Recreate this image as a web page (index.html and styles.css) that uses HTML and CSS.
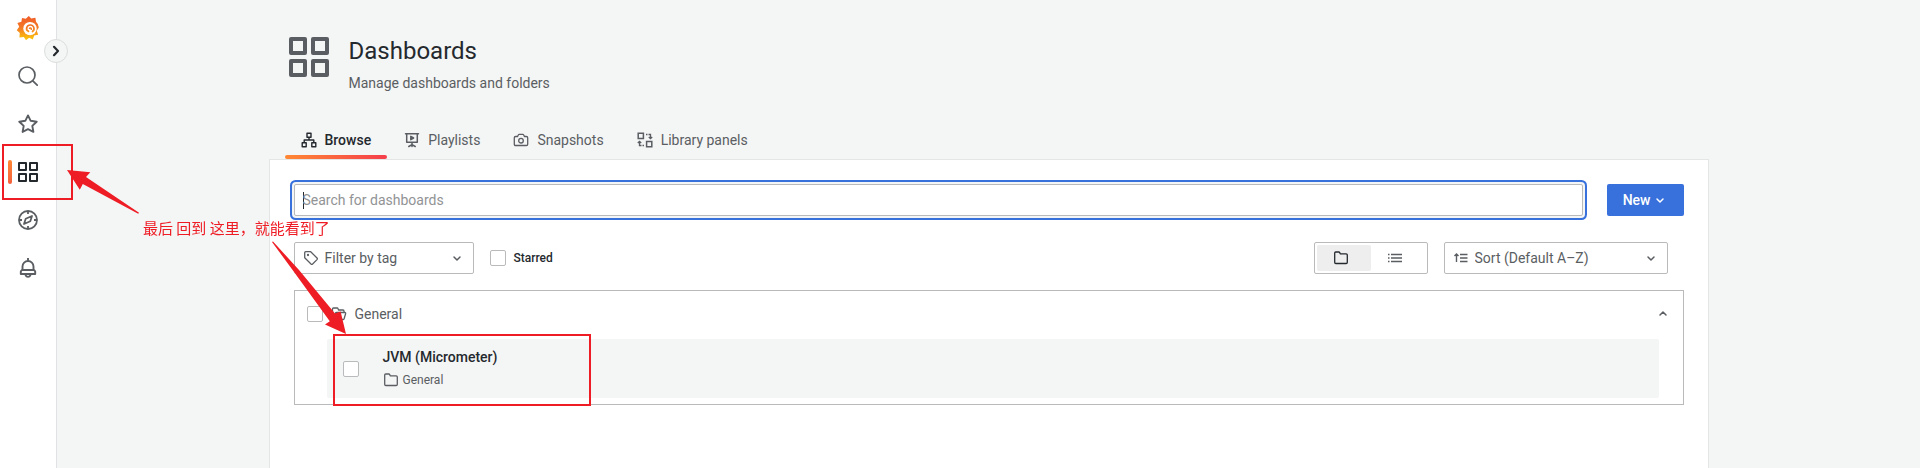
FILE: index.html
```
<!DOCTYPE html>
<html lang="en">

<head>
    <meta charset="UTF-8">
    <meta name="viewport" content="width=device-width, initial-scale=1.0">
    <title>Dashboards - Grafana</title>
    <link rel="stylesheet" href="styles.css">
</head>

<body>
    <!-- shared icon shapes -->
    <svg class="sprite" aria-hidden="true">
        <symbol id="icon-apps" viewBox="0 0 20 20">
            <path d="M1 1h7v7H1zM12 1h7v7h-7zM1 12h7v7H1zM12 12h7v7h-7z" fill="none" stroke="currentColor" stroke-width="2" stroke-linejoin="round" />
        </symbol>
        <symbol id="icon-down" viewBox="0 0 16 16">
            <path d="M5 7l3 3 3-3" fill="none" stroke="currentColor" stroke-width="1.5" stroke-linecap="round" stroke-linejoin="round" />
        </symbol>
        <symbol id="icon-folder" viewBox="0 0 16 16">
            <path d="M2.7 2h3.1q.6 0 .9.6l.5 1.2h6q1.1 0 1.1 1.1v7.4q0 1.2-1.1 1.2H2.8q-1.1 0-1.1-1.2V3q0-1 1-1z" fill="none" stroke="currentColor" stroke-width="1.3" stroke-linejoin="round" />
        </symbol>
    </svg>

    <div class="app">
        <nav class="sidebar">
            <a class="nav-item" href="#" aria-label="Home">
                <svg width="24" height="24" viewBox="0 0 24 24">
                    <defs>
                        <linearGradient id="sun" gradientUnits="userSpaceOnUse" x1="0" y1="0" x2="0" y2="24">
                            <stop offset="0" stop-color="#f05a28" />
                            <stop offset="0.5" stop-color="#f47b25" />
                            <stop offset="1" stop-color="#fbca0a" />
                        </linearGradient>
                    </defs>
                    <path fill="url(#sun)" d="M12.800 0l2.400 2.600 4.200-.8.600 4q2.800 2.600 2.800 5.600l-2 3.400 1.400 4-4 .8-1.400 3.800-3.600-1.600-3.200 2.400-2.200-3.200-4.400.4.400-4.400L.800 14.200l2.400-3.400L1.400 7l4-1.200L6 2l3.800.8z" />
                    <circle cx="14" cy="12.600" r="6.700" fill="#fff" />
                    <path fill="none" stroke="url(#sun)" stroke-width="1.700" stroke-linecap="round" d="M12.500 15.300C9 13.600 10.700 8.800 14.500 9c3.600.2 4.700 4.600 2 6.500M13.600 12.200q1.600-.6 1.700 1" />
                </svg>
            </a>
            <a class="nav-item" href="#" aria-label="Search">
                <svg width="20" height="20" viewBox="0 0 20 20" fill="none" stroke="currentColor" stroke-width="1.7" stroke-linecap="round">
                    <circle cx="9" cy="9" r="8" />
                    <path d="M14.8 14.8L19.200 19.200" />
                </svg>
            </a>
            <a class="nav-item" href="#" aria-label="Starred">
                <svg width="20" height="20" viewBox="0 0 20 20" fill="none" stroke="currentColor" stroke-width="1.9" stroke-linejoin="round">
                    <path d="M10 1.400l2.700 5.400 6 .9-4.400 4.200 1.100 6-5.400-2.800-5.400 2.800 1.100-6L1.300 7.700l6-.9z" />
                </svg>
            </a>
            <a class="nav-item active" href="#" aria-label="Dashboards">
                <svg width="20" height="20"><use href="#icon-apps" /></svg>
            </a>
            <a class="nav-item" href="#" aria-label="Explore">
                <svg width="20" height="20" viewBox="0 0 20 20" fill="none" stroke="currentColor" stroke-width="1.8" stroke-linejoin="round">
                    <circle cx="10" cy="10" r="9" />
                    <path d="M10 1v3M10 16v3M1 10h3M16 10h3M14 6l-1.700 5.200L6 14l1.700-5.200z" />
                </svg>
            </a>
            <a class="nav-item" href="#" aria-label="Alerting">
                <svg width="20" height="20" viewBox="0 0 20 20" fill="none" stroke="currentColor" stroke-width="1.9" stroke-linejoin="round">
                    <path d="M10 0v3M4.500 12V8.500a5.500 5.500 0 0 1 11 0V12M3.800 12h12.400l1 1.500V16H2.800v-2.500zM7.200 16q.8 2.900 2.800 2.900t2.800-2.900" />
                </svg>
            </a>
            <button class="sidebar-toggle" aria-label="Expand menu">
                <svg width="8" height="12" viewBox="0 0 8 12"><path d="M2 1.800L6 6l-4 4.200" fill="none" stroke="currentColor" stroke-width="2.200" stroke-linecap="round" stroke-linejoin="round" /></svg>
            </button>
        </nav>

        <main class="main">
            <header class="page-header">
                <svg width="40" height="40"><use href="#icon-apps" /></svg>
                <div>
                    <h1 class="page-title">Dashboards</h1>
                    <div class="page-subtitle">Manage dashboards and folders</div>
                </div>
            </header>

            <nav class="tabs">
                <a class="tab active" href="#">
                    <svg width="16" height="16" viewBox="0 0 16 16" fill="none" stroke="currentColor" stroke-width="1.400" stroke-linejoin="round">
                        <path d="M6 1.200h4v4H6zM1.200 10.800h4v4h-4zM10.800 10.800h4v4h-4zM8 5.200V8M3.200 10.800V8h9.600v2.800" />
                    </svg>
                    Browse
                </a>
                <a class="tab" href="#">
                    <svg width="16" height="16" viewBox="0 0 16 16" fill="none" stroke="currentColor" stroke-width="1.500" stroke-linecap="round" stroke-linejoin="round">
                        <path d="M1.500 1.700h13M2.700 1.700v8.600h10.600V1.700M8 10.500v4M4.800 14.500L8 12.600l3.200 1.900M6.800 4.300v3.400L9.600 6z" />
                    </svg>
                    Playlists
                </a>
                <a class="tab" href="#">
                    <svg width="16" height="16" viewBox="0 0 16 16" fill="none" stroke="currentColor" stroke-width="1.300" stroke-linejoin="round">
                        <path d="M2.600 4.500h2l.8-1.700q.2-.5.8-.5h3.600q.6 0 .8.5l.8 1.700h2q1.300 0 1.300 1.300v6.400q0 1.300-1.300 1.300H2.600q-1.300 0-1.300-1.300V5.800q0-1.300 1.300-1.300z" />
                        <circle cx="8" cy="8.700" r="2.300" />
                    </svg>
                    Snapshots
                </a>
                <a class="tab" href="#">
                    <svg width="16" height="16" viewBox="0 0 16 16" fill="none" stroke="currentColor" stroke-width="1.300">
                        <path d="M1.200 1.200h5.200v5.200H1.200zM9.600 9.600h5.200v5.200H9.600z" stroke-width="1.500" />
                        <path d="M9 2.500h1.500M11.500 2.500h2v4M11.800 5l1.700 1.700L15.200 5M7 13.500H5.500M4.500 13.500h-2v-4M.8 11l1.700-1.700L4.200 11" />
                    </svg>
                    Library panels
                </a>
            </nav>

            <section class="panel">
                <div class="search-row">
                    <input class="search-input" type="text" placeholder="Search for dashboards" aria-label="Search for dashboards" autofocus>
                    <button class="new-button">New<svg width="16" height="16"><use href="#icon-down" /></svg></button>
                </div>

                <div class="filter-row">
                    <div class="select tag-select">
                        <svg width="16" height="16" viewBox="0 0 16 16" fill="none" stroke="currentColor" stroke-width="1.300" stroke-linejoin="round">
                            <path d="M1.700 2.700q0-1 1-1h5L14 8q.7.800 0 1.600L9.600 14q-.8.700-1.600 0L1.700 7.700z" />
                            <circle cx="5" cy="5" r=".5" fill="currentColor" />
                        </svg>
                        <select aria-label="Tag filter">
                            <option>Filter by tag</option>
                        </select>
                        <svg width="16" height="16"><use href="#icon-down" /></svg>
                    </div>
                    <label class="starred"><input class="checkbox" type="checkbox">Starred</label>

                    <div class="layout-toggle">
                        <button class="active" aria-label="View by folders">
                            <svg width="16" height="16"><use href="#icon-folder" /></svg>
                        </button>
                        <button aria-label="View as list">
                            <svg width="16" height="16" viewBox="0 0 16 16" stroke="currentColor" stroke-width="1.300">
                                <path d="M4 4.500h11M4 8h11M4 11.500h11" />
                                <path d="M1 4.500h1.500M1 8h1.500M1 11.500h1.500" />
                            </svg>
                        </button>
                    </div>
                    <div class="select sort-select">
                        <svg width="16" height="16" viewBox="0 0 16 16" fill="none" stroke="currentColor" stroke-width="1.400">
                            <path d="M3.500 12V4.500M1.500 6l2-2 2 2M7 4.500h7.500M7 8h7.500M7 11.500h7.500" />
                        </svg>
                        <select aria-label="Sort">
                            <option>Sort (Default A–Z)</option>
                        </select>
                        <svg width="16" height="16"><use href="#icon-down" /></svg>
                    </div>
                </div>

                <div class="folder">
                    <div class="folder-header">
                        <input class="checkbox" type="checkbox" aria-label="Select folder General">
                        <svg width="16" height="16" viewBox="0 0 16 16" fill="none" stroke="currentColor" stroke-width="1.300" stroke-linejoin="round">
                            <path d="M13 6.500V5q0-1-1-1H7.500L7 2.600Q6.800 2 6.200 2H2.500q-1 0-1 1v9.500q0 1 1 1H12q.8 0 1.100-.8l1.500-5q.3-1.200-.8-1.200H5.500q-.8 0-1.100.8L2.700 13" />
                        </svg>
                        <span>General</span>
                        <button class="collapse" aria-label="Collapse folder">
                            <svg width="16" height="16"><use href="#icon-down" /></svg>
                        </button>
                    </div>
                    <div class="dashboard">
                        <input class="checkbox" type="checkbox" aria-label="Select JVM (Micrometer)">
                        <div>
                            <a class="dashboard-title" href="#">JVM (Micrometer)</a>
                            <div class="dashboard-folder">
                                <svg width="16" height="16"><use href="#icon-folder" /></svg>
                                General
                            </div>
                        </div>
                    </div>
                </div>
            </section>
        </main>
    </div>

    <!-- annotations drawn over the page -->
    <div class="mark mark-nav"></div>
    <div class="mark mark-dashboard"></div>
    <svg class="arrows" width="400" height="400" viewBox="0 0 400 400" fill="#ee1c24" aria-hidden="true">
        <path d="M67 170l23.300 2.300-4.300 4.600 53 35.800-.8 1-55.400-29.600-3 5.600z" />
        <path d="M272 242l1-.5L299 270l36 43.500 5.600-2L346 334l-21-9.500 4.800-3.200L292.600 270z" />
    </svg>
    <div class="note" lang="zh">最后 回到 这里，就能看到了</div>
</body>

</html>
```

FILE: styles.css
```
* {
    box-sizing: border-box;
}

body {
    margin: 0;
    font-family: Roboto, Arial, sans-serif;
    font-size: 14px;
    line-height: 22px;
    color: #24292e;
    background-color: #f4f5f5;
}

svg {
    display: block;
    flex-shrink: 0;
}

a {
    color: inherit;
    text-decoration: none;
}

button,
input,
select {
    font: inherit;
    color: inherit;
}

.sprite {
    position: absolute;
    width: 0;
    height: 0;
}

.app {
    display: flex;
    min-height: 100vh;
}

/* sidebar */
.sidebar {
    position: relative;
    width: 57px;
    flex-shrink: 0;
    padding-top: 4px;
    background-color: #fff;
    border-right: 1px solid #e1e2e3;
}

.nav-item {
    position: relative;
    display: flex;
    align-items: center;
    justify-content: center;
    height: 48px;
    color: #5a5e62;
}

.nav-item.active {
    color: #24292e;
}

.nav-item.active::before {
    content: "";
    position: absolute;
    left: 8px;
    top: 12px;
    bottom: 12px;
    width: 4px;
    border-radius: 2px;
    background-image: linear-gradient(#ff8833, #f55f3e);
}

.sidebar-toggle {
    position: absolute;
    top: 39px;
    right: -12px;
    display: flex;
    align-items: center;
    justify-content: center;
    width: 24px;
    height: 24px;
    padding: 0;
    border: 1px solid #dcdddd;
    border-radius: 50%;
    background-color: #f4f5f5;
}

/* page */
.main {
    flex: 1;
    display: flex;
    flex-direction: column;
    max-width: 1440px;
    margin: 0 auto;
}

.page-header {
    display: flex;
    gap: 20px;
    padding: 37px 20px 0;
    color: #5a5e62;
}

.page-title {
    margin: 0;
    font-size: 24px;
    font-weight: 400;
    line-height: 28px;
    color: #24292e;
}

.page-subtitle {
    margin-top: 7px;
}

.tabs {
    display: flex;
    gap: 1px;
    margin-top: 28px;
    padding: 0 16px;
}

.tab {
    position: relative;
    display: flex;
    align-items: center;
    gap: 8px;
    height: 37px;
    padding: 0 16px 2px;
    color: #5a5e62;
}

.tab.active {
    font-weight: 500;
    color: #24292e;
}

.tab.active::after {
    content: "";
    position: absolute;
    left: 0;
    right: 0;
    bottom: 0;
    height: 4px;
    border-radius: 2px;
    background-image: linear-gradient(90deg, #ff8833, #f53e4c);
}

.panel {
    flex: 1;
    padding: 24px;
    background-color: #fff;
    border: 1px solid #e4e5e5;
    border-bottom: none;
}

.search-row {
    display: flex;
    gap: 24px;
}

.search-input {
    flex: 1;
    height: 32px;
    padding: 0 8px;
    border: 1px solid #b9babb;
    border-radius: 2px;
    outline: none;
    background-color: #fff;
}

/* text cursor at the start of the empty field */
.search-input:focus {
    caret-color: transparent;
    background-image: linear-gradient(#24292e, #24292e);
    background-repeat: no-repeat;
    background-position: 8px center;
    background-size: 1px 17px;
    box-shadow: 0 0 0 2px #f4f5f5, 0 0 0 4px #3871dc;
}

.search-input::placeholder {
    color: #919395;
}

.new-button {
    display: flex;
    align-items: center;
    gap: 1px;
    height: 32px;
    padding: 0 16px;
    border: none;
    border-radius: 2px;
    font-weight: 500;
    color: #fff;
    background-color: #3871dc;
}

.filter-row {
    display: flex;
    align-items: center;
    gap: 16px;
    margin-top: 26px;
    padding-right: 16px;
}

.select {
    display: flex;
    align-items: center;
    height: 32px;
    padding: 0 8px;
    border: 1px solid #b9babb;
    border-radius: 2px;
    color: #5a5e62;
}

.select select {
    flex: 1;
    min-width: 0;
    margin-left: 6px;
    padding: 0;
    border: none;
    outline: none;
    appearance: none;
    background: none;
}

.tag-select {
    width: 180px;
}

.sort-select {
    width: 224px;
}

.checkbox {
    flex-shrink: 0;
    width: 16px;
    height: 16px;
    margin: 0;
    appearance: none;
    border: 1px solid #b9babb;
    border-radius: 2px;
    background-color: #fff;
}

.starred {
    display: flex;
    align-items: center;
    gap: 8px;
    font-size: 12px;
    font-weight: 500;
}

.layout-toggle {
    display: flex;
    width: 114px;
    height: 32px;
    margin-left: auto;
    padding: 2px;
    border: 1px solid #b9babb;
    border-radius: 2px;
}

.layout-toggle button {
    flex: 1;
    display: flex;
    align-items: center;
    justify-content: center;
    padding: 0 6px 0 0;
    border: none;
    border-radius: 2px;
    color: #5a5e62;
    background: none;
}

.layout-toggle .active {
    color: #24292e;
    background-color: #eeeeee;
}

.folder {
    margin-top: 16px;
    padding: 0 12px 6px;
    border: 1px solid #b9babb;
}

.folder-header {
    display: flex;
    align-items: center;
    gap: 8px;
    height: 46px;
    color: #5a5e62;
}

.collapse {
    margin-left: auto;
    padding: 0;
    border: none;
    background: none;
    transform: rotate(180deg);
}

.dashboard {
    display: flex;
    align-items: center;
    gap: 24px;
    margin: 2px 12px 0 20px;
    padding: 8px 16px;
    border-radius: 2px;
    background-color: #f4f5f5;
}

.dashboard-title {
    display: block;
    line-height: 20px;
    font-weight: 500;
}

.dashboard-folder {
    display: flex;
    align-items: center;
    gap: 4px;
    margin-top: 3px;
    font-size: 12px;
    line-height: 20px;
    color: #5a5e62;
}

/* annotations */
.mark {
    position: absolute;
    border: 2px solid #ee1c24;
}

.mark-nav {
    left: 2px;
    top: 144px;
    width: 71px;
    height: 56px;
}

.mark-dashboard {
    left: 333px;
    top: 334px;
    width: 258px;
    height: 72px;
}

.arrows {
    position: absolute;
    left: 0;
    top: 0;
    pointer-events: none;
}

.note {
    position: absolute;
    left: 143px;
    top: 217px;
    font-family: "Noto Sans CJK SC", sans-serif;
    font-size: 15px;
    color: #ee1c24;
}
```
